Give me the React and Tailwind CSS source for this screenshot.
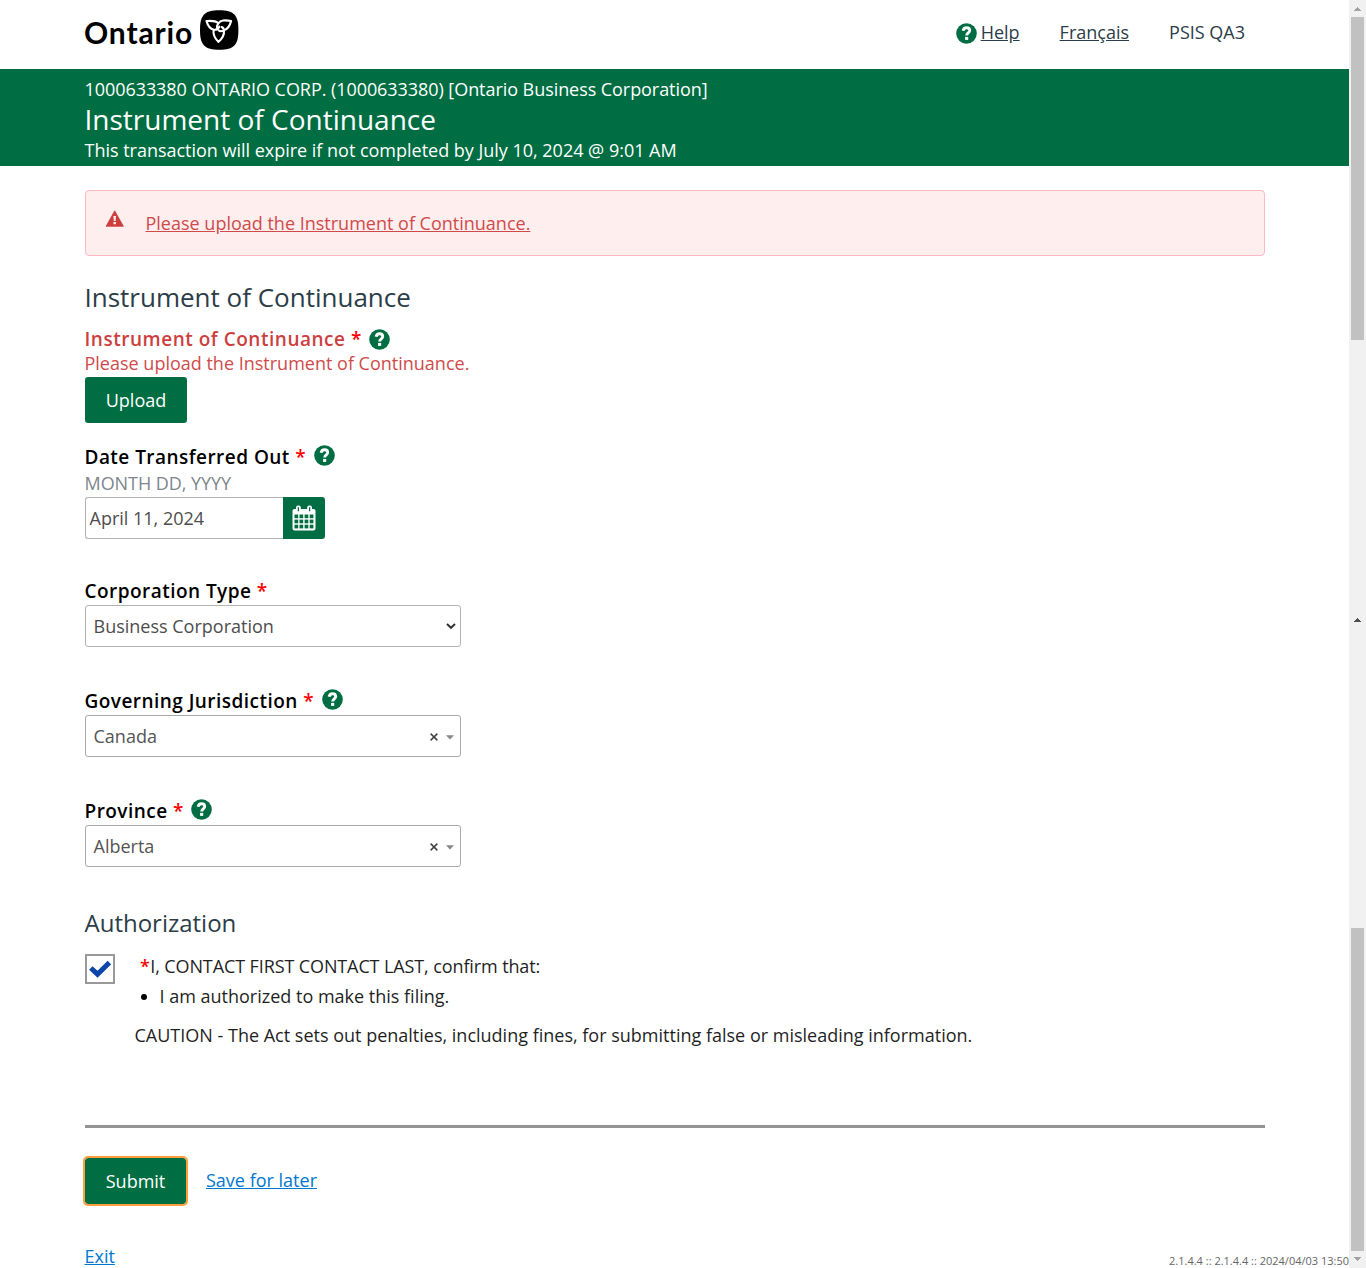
import React from "react";

function HelpIcon({ className = "" }) {
  return (
    <svg className={"h-[21px] w-[21px] shrink-0 " + className} viewBox="0 0 21 21">
      <circle cx="10.5" cy="10.5" r="10.3" fill="#006e42" />
      <path d="M7.1 7.8 C7.5 5.5 9 4.7 10.5 4.7 C12.4 4.7 13.7 5.9 13.7 7.5 C13.7 9.9 10.7 9.8 10.7 12.5" fill="none" stroke="#fff" strokeWidth="2.9" />
      <rect x="9.1" y="13.9" width="3.1" height="3" fill="#fff" />
    </svg>
  );
}

function Label({ text, error, help }) {
  return (
    <div className="-ml-[0.5px] flex h-[26px] items-center whitespace-nowrap">
      <span className={"text-[19px] leading-[26px] font-semibold " + (error ? "tracking-[0.52px] text-[#cd3f3f]" : "tracking-[0.46px] text-[#000]")}>
        {text} <span className="text-[#f00]">*</span>
      </span>
      {help && <HelpIcon className={error ? "mt-[1px] ml-[7.5px]" : "mb-[3px] ml-[7.5px]"} />}
    </div>
  );
}

function Combo({ value }) {
  return (
    <div className="mt-[1px] flex h-[42px] w-[376px] items-center rounded-[3px] border border-[#a9a9a9] pr-[6px] pl-[7.5px] text-[#555]">
      <span className="grow text-[18px] leading-[24px]">{value}</span>
      <svg className="mt-[1px] mr-[8px] h-[8px] w-[8px]" viewBox="0 0 8 8">
        <path d="M0.6 0.6 L7.4 7.4 M7.4 0.6 L0.6 7.4" stroke="#444" strokeWidth="1.5" />
      </svg>
      <svg className="mt-[3px] h-[5px] w-[8px]" viewBox="0 0 8 5">
        <path d="M0 0.3 H8 L4 4.6 Z" fill="#888" />
      </svg>
    </div>
  );
}

function Trillium() {
  return (
    <svg className="ml-[7px] h-[40px] w-[40px]" viewBox="0 0 40 40">
      <path d="M19.2 0.3 C34 0.3 38.4 5 38.4 20 C38.4 35 34 39.8 19.2 39.8 C4.5 39.8 0 35 0 20 C0 5 4.5 0.3 19.2 0.3 Z" fill="#000" />
      <g transform="translate(-0.9 -0.3)" fill="none" stroke="#fff" strokeWidth="2.1" strokeLinejoin="round" strokeLinecap="round">
        <path d="M18.8 13.2 C16 10.6 12 11 7.4 11.4 C8.6 15.5 10.5 19.2 14.6 20 C17.2 20.4 19.3 19 20.2 17" />
        <path d="M18 18.6 C17.2 15 20 11.4 24 10.8 C27 10.3 29.5 10.8 32 11.4 C30.8 15.8 28.8 19.3 25.2 20.2" />
        <path d="M14.6 20 C13.6 25 16 28.8 19.2 32.2 C23 29 25.4 25 24.8 20.6 C24.6 18.6 23.6 17.6 22.6 17.4 M24.6 20.4 C22.6 21.8 20.4 21.6 19.4 20.4" />
      </g>
    </svg>
  );
}

function Calendar() {
  return (
    <svg className="h-[26px] w-[24px]" viewBox="0 0 24 26">
      <rect x="0.5" y="4" width="23" height="21.5" rx="2" fill="#fff" />
      <rect x="4" y="0.5" width="4.8" height="7" rx="2" fill="#fff" />
      <rect x="15.2" y="0.5" width="4.8" height="7" rx="2" fill="#fff" />
      <path d="M6.4 2.2V6.3M17.6 2.2V6.3" stroke="#006e42" strokeWidth="1.3" />
      <g fill="#006e42">
        {[9.5, 14.6, 19.7].map((y) =>
          [2.5, 7.5, 12.6, 17.7].map((x) => <rect key={x + "-" + y} x={x} y={y} width="3.7" height="3.7" />)
        )}
      </g>
    </svg>
  );
}

function Arrow({ up, color }) {
  return (
    <svg className="h-[4px] w-[7px]" viewBox="0 0 7 4" shapeRendering="crispEdges">
      <path d={up ? "M3 0h1v1h1v1h1v1h1v1H0V3h1V2h1V1h1z" : "M0 0h7v1H6v1H5v1H4v1H3V3H2V2H1V1H0z"} fill={color} />
    </svg>
  );
}

function Scrollbar() {
  return (
    <div className="flex h-[1268px] w-[17px] shrink-0 flex-col items-center bg-[#f1f1f1]">
      <div className="flex h-[17px] items-center pt-[1px]"><Arrow up color="#a3a3a3" /></div>
      <div className="h-[323px] w-[13px] bg-[#c1c1c1]" />
      <div className="flex h-[588px] items-start pt-[278px]"><Arrow up color="#505050" /></div>
      <div className="h-[323px] w-[13px] bg-[#c1c1c1]" />
      <div className="flex h-[17px] items-center pb-[1px]"><Arrow color="#a3a3a3" /></div>
    </div>
  );
}

export default function App() {
  return (
    <div className="flex h-[1268px] w-[1366px] overflow-hidden bg-white font-['Open_Sans',sans-serif] text-[18px] leading-[24px] text-[#1a1a1a]">
      <div className="flex w-[1349px] flex-col">
        <header className="flex h-[69px] items-start pr-[104px] pl-[84px]">
          <div className="flex grow items-start pt-[10px]">
            <span className="mt-[4px] w-[109px] font-['Lato',sans-serif] text-[30px] leading-[36px] font-bold tracking-[0.85px] text-black">Ontario</span>
            <Trillium />
          </div>
          <nav className="flex items-center pt-[20px] whitespace-nowrap text-[#2b3d48]">
            <HelpIcon className="mt-[2px] mr-[4px]" />
            <a className="mr-[40px] underline">Help</a>
            <a className="mr-[40px] underline">Français</a>
            <span>PSIS QA3</span>
          </nav>
        </header>
        <section className="h-[97px] bg-[#006e42] pt-[8px] pl-[84.5px] whitespace-nowrap text-white">
          <p className="h-[24px] tracking-[-0.06px]">1000633380 ONTARIO CORP. (1000633380) [Ontario Business Corporation]</p>
          <h1 className="h-[37px] text-[28px] leading-[36px]">Instrument of Continuance</h1>
          <p className="tracking-[-0.015px]">This transaction will expire if not completed by July 10, 2024 @ 9:01 AM</p>
        </section>
        <main className="flex flex-col pt-[24px] pr-[84px] pl-[85px]">
          <div className="flex h-[66px] items-center rounded-[4px] border border-[#ffb8c4] bg-[#ffeeee] pl-[19.5px] text-[#cf4b4b]">
            <svg className="mb-[9px] h-[17px] w-[18px]" viewBox="0 0 18 17">
              <path d="M8.7 0.8 L17.4 16.3 H0.1 Z" fill="#cd3f3f" stroke="#cd3f3f" strokeLinejoin="round" strokeWidth="0.8" />
              <path d="M7.4 6h2.6l-.4 5H7.8zM7.5 12h2.4v2.3H7.5z" fill="#ffeeee" />
            </svg>
            <a className="ml-[22px] underline">Please upload the Instrument of Continuance.</a>
          </div>
          <h2 className="mt-[23px] -ml-[0.5px] h-[37px] text-[26px] leading-[36px] text-[#2b3d48]">Instrument of Continuance</h2>
          <div className="mt-[10px]"><Label text="Instrument of Continuance" error help /></div>
          <p className="-mt-[1px] -ml-[0.5px] h-[26px] text-[#cf4b4b]">Please upload the Instrument of Continuance.</p>
          <button className="h-[46px] w-[102px] rounded-[3px] bg-[#006e42] text-white">Upload</button>
          <div className="mt-[21px]"><Label text="Date Transferred Out" help /></div>
          <p className="mt-[1px] -ml-[0.5px] h-[26px] tracking-[-0.05px] text-[#7d868b]">MONTH DD, YYYY</p>
          <div className="flex h-[42px] w-[240px]">
            <div className="flex w-[198px] items-center rounded-l-[3px] border border-r-0 border-[#b3b3b3] pl-[3.5px] text-[#4d4d4d]">April 11, 2024</div>
            <button className="flex w-[42px] items-center justify-center rounded-r-[3px] bg-[#006e42]"><Calendar /></button>
          </div>
          <div className="mt-[39px]"><Label text="Corporation Type" /></div>
          <div className="mt-[1px] flex h-[42px] w-[376px] items-center justify-between rounded-[3px] border border-[#b3b3b3] pr-[4px] pl-[7.5px] text-[#4d4d4d]">
            <span>Business Corporation</span>
            <svg className="h-[6px] w-[10px]" viewBox="0 0 10 6"><path d="M1 1 L5 4.8 L9 1" fill="none" stroke="#333" strokeWidth="2" /></svg>
          </div>
          <div className="mt-[41px]"><Label text="Governing Jurisdiction" help /></div>
          <Combo value="Canada" />
          <div className="mt-[41px]"><Label text="Province" help /></div>
          <Combo value="Alberta" />
          <h2 className="mt-[38px] -ml-[0.5px] h-[37px] text-[24px] leading-[36px] text-[#2b3d48]">Authorization</h2>
          <div className="mt-[12px] flex text-[#1f1f1f]">
            <div className="flex h-[30px] w-[30px] items-center justify-center border-2 border-[#999]">
              <svg className="h-[18px] w-[22px]" viewBox="0 0 22 18"><path d="M1.8 8 L8.5 14.2 L20.4 2.6" fill="none" stroke="#0d45a8" strokeWidth="5" /></svg>
            </div>
            <div className="ml-[19.5px] whitespace-nowrap">
              <p className="h-[30px] pl-[5.5px] tracking-[-0.11px]"><span className="mr-[0.5px] font-semibold text-[#f00]">*</span>I, CONTACT FIRST CONTACT LAST, confirm that:</p>
              <div className="flex h-[39px] pl-[6.5px]">
                <span className="mt-[10px] mr-[12.5px] h-[6px] w-[6px] rounded-full bg-black" />
                <span>I am authorized to make this filing.</span>
              </div>
              <p>CAUTION - The Act sets out penalties, including fines, for submitting false or misleading information.</p>
            </div>
          </div>
          <hr className="mt-[78px] border-0 border-t-[3px] border-[#949494]" />
          <div className="mt-[30px] flex items-start">
            <button className="h-[46px] w-[101px] rounded-[3px] bg-[#006e42] text-white outline-2 outline-[#ff9f3c]">Submit</button>
            <a className="mt-[10px] ml-[20px] text-[#0078d0] underline">Save for later</a>
          </div>
        </main>
        <footer className="mt-[40px] flex h-[24px] items-start justify-between pl-[84.5px]">
          <a className="text-[#0078d0] underline">Exit</a>
          <span className="mt-[7px] text-[11px] leading-[20px] text-[#666]">2.1.4.4 :: 2.1.4.4 :: 2024/04/03 13:50</span>
        </footer>
      </div>
      <Scrollbar />
    </div>
  );
}
